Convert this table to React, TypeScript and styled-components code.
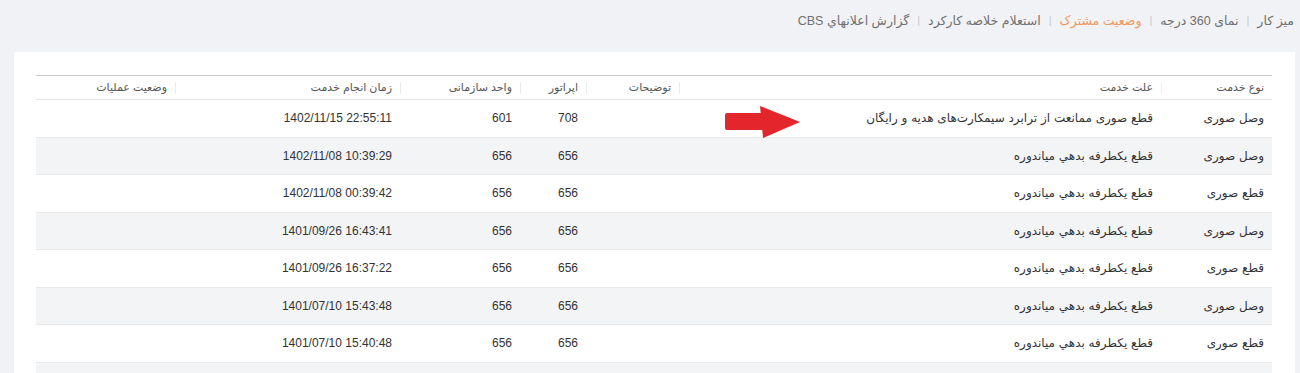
import React from "react";
import styled, { createGlobalStyle } from "styled-components";

const Global = createGlobalStyle`
  html, body { margin: 0; padding: 0; background: #f0f2f5; }
  body { font-family: "Liberation Sans", "DejaVu Sans", sans-serif; }
`;

const Page = styled.div`
  direction: rtl;
  width: 1300px;
  height: 373px;
  overflow: hidden;
  background: #f0f2f5;
`;

const Breadcrumb = styled.nav`
  display: flex;
  align-items: center;
  height: 40px;
  padding: 0 6px;
  margin-bottom: 12px;
  font-size: 12.5px;
  color: #707070;
`;

const Crumb = styled.span<{ $active?: boolean }>`
  color: ${(p) => (p.$active ? "#f0985a" : "#707070")};
  white-space: nowrap;
`;

const Sep = styled.span`
  color: #c8c8c8;
  margin: 0 8px;
  font-size: 11px;
`;

const Card = styled.div`
  background: #ffffff;
  margin: 0 5px 0 14px;
  padding: 23px 23px 0 22px;
  height: 400px;
`;

const Table = styled.div`
  position: relative;
  display: grid;
  grid-template-columns: 111px 482px 93px 66px 120px 225px 139px;
  border-top: 1px solid #c9c9c9;
`;

const HeadCell = styled.div<{ $sep?: boolean }>`
  position: relative;
  height: 23px;
  display: flex;
  align-items: center;
  padding: 0 8px;
  font-size: 11px;
  color: #555;
  border-bottom: 1px solid #e6e6e6;
  white-space: nowrap;
  &::before {
    content: "";
    display: ${(p) => (p.$sep ? "block" : "none")};
    position: absolute;
    left: 0;
    top: 50%;
    width: 1px;
    height: 12px;
    margin-top: -6px;
    background: #ececec;
  }
`;

const Cell = styled.div<{ $alt?: boolean; $num?: boolean }>`
  height: 36.5px;
  display: flex;
  align-items: center;
  padding: 0 8px;
  font-size: 12px;
  color: #333;
  background: ${(p) => (p.$alt ? "#f3f4f6" : "#ffffff")};
  border-bottom: 1px solid #e8e8e8;
  white-space: nowrap;
  font-family: ${(p) =>
    p.$num ? '"Liberation Sans", Arial, sans-serif' : '"DejaVu Sans", "Liberation Sans", sans-serif'};
`;

const Arrow = styled.svg`
  position: absolute;
  left: 687px;
  top: 29px;
  width: 80px;
  height: 36px;
`;

const Num = styled.span`
  direction: ltr;
  unicode-bidi: isolate;
`;

const headers = [
  "نوع خدمت",
  "علت خدمت",
  "توضیحات",
  "اپراتور",
  "واحد سازمانی",
  "زمان انجام خدمت",
  "وضعیت عملیات",
];

type Row = { type: string; reason: string; op: string; unit: string; time: string };

const reason = "قطع يکطرفه بدهي مياندوره";

const rows: Row[] = [
  { type: "وصل صوری", reason: "قطع صوری ممانعت از ترابرد سیمکارت‌های هدیه و رایگان", op: "708", unit: "601", time: "1402/11/15 22:55:11" },
  { type: "وصل صوری", reason, op: "656", unit: "656", time: "1402/11/08 10:39:29" },
  { type: "قطع صوری", reason, op: "656", unit: "656", time: "1402/11/08 00:39:42" },
  { type: "وصل صوری", reason, op: "656", unit: "656", time: "1401/09/26 16:43:41" },
  { type: "قطع صوری", reason, op: "656", unit: "656", time: "1401/09/26 16:37:22" },
  { type: "وصل صوری", reason, op: "656", unit: "656", time: "1401/07/10 15:43:48" },
  { type: "قطع صوری", reason, op: "656", unit: "656", time: "1401/07/10 15:40:48" },
  { type: "", reason: "", op: "", unit: "", time: "" },
];

const crumbs = ["میز کار", "نمای 360 درجه", "وضعیت مشترک", "استعلام خلاصه کارکرد", "گزارش اعلانهاي CBS"];

export default function App() {
  return (
    <Page>
      <Global />
      <Breadcrumb>
        {crumbs.map((c, i) => (
          <React.Fragment key={c}>
            {i > 0 && <Sep>|</Sep>}
            <Crumb $active={i === 2}>{c}</Crumb>
          </React.Fragment>
        ))}
      </Breadcrumb>
      <Card>
        <Table>
          {headers.map((h, i) => (
            <HeadCell key={h} $sep={i < headers.length - 1}>
              {h}
            </HeadCell>
          ))}
          {rows.map((r, i) => {
            const alt = i % 2 === 1;
            return (
              <React.Fragment key={i}>
                <Cell $alt={alt}>{r.type}</Cell>
                <Cell $alt={alt}>{r.reason}</Cell>
                <Cell $alt={alt}></Cell>
                <Cell $alt={alt} $num>{r.op}</Cell>
                <Cell $alt={alt} $num>{r.unit}</Cell>
                <Cell $alt={alt} $num><Num>{r.time}</Num></Cell>
                <Cell $alt={alt}></Cell>
              </React.Fragment>
            );
          })}
          <Arrow viewBox="0 0 80 36">
            <rect x="2" y="8" width="40" height="17" rx="2" fill="#e3262b" />
            <polygon points="37,1 77,17 40,33" fill="#e3262b" />
          </Arrow>
        </Table>
      </Card>
    </Page>
  );
}
